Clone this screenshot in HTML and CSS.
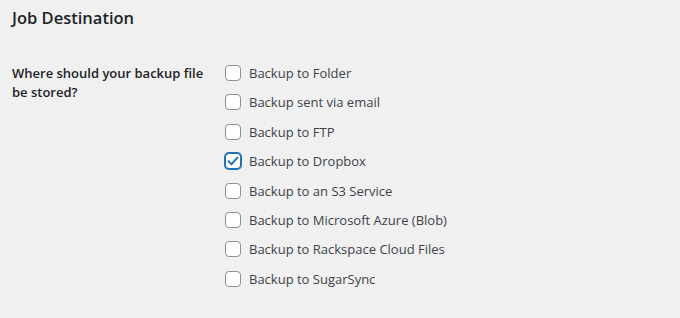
FILE: index.html
```html
<!DOCTYPE html>
<html lang="en">
<head>
<meta charset="utf-8">
<title>Job Destination</title>
<link rel="stylesheet" href="styles.css">
</head>
<body>
<div class="wrap">
  <h2 class="title">Job Destination</h2>
  <div class="form-row">
    <div class="row-label">Where should your backup file be stored?</div>
    <fieldset class="options">
      <label class="opt"><span class="box"></span><span>Backup to Folder</span></label>
      <label class="opt"><span class="box"></span><span>Backup sent via email</span></label>
      <label class="opt"><span class="box"></span><span>Backup to FTP</span></label>
      <label class="opt"><span class="box checked"><svg viewBox="0 0 16 16" width="16" height="16"><path d="M3.6 8.2 L6.6 11.2 L12.4 4.6" fill="none" stroke="#2271b1" stroke-width="2" stroke-linecap="round" stroke-linejoin="round"/></svg></span><span>Backup to Dropbox</span></label>
      <label class="opt"><span class="box"></span><span>Backup to an S3 Service</span></label>
      <label class="opt"><span class="box"></span><span>Backup to Microsoft Azure (Blob)</span></label>
      <label class="opt"><span class="box"></span><span>Backup to Rackspace Cloud Files</span></label>
      <label class="opt"><span class="box"></span><span>Backup to SugarSync</span></label>
    </fieldset>
  </div>
</div>
</body>
</html>
```
FILE: styles.css
```css
html, body {
  margin: 0;
  padding: 0;
  background: #f0f0f1;
}
body {
  font-family: "Open Sans", "Noto Sans", sans-serif;
  font-size: 13px;
  color: #3c434a;
  width: 680px;
  height: 318px;
  overflow: hidden;
}
.wrap {
  padding: 0 12px;
}
.title {
  margin: 0;
  padding-top: 7px;
  font-size: 16.5px;
  line-height: 22px;
  font-weight: 600;
  color: #1d2327;
}
.form-row {
  display: grid;
  grid-template-columns: 213px 1fr;
  margin-top: 34px;
}
.row-label {
  font-weight: 600;
  color: #1d2327;
  line-height: 19px;
  width: 196px;
  padding-top: 1px;
}
.options {
  margin: 0;
  padding: 0;
  border: 0;
  display: flex;
  flex-direction: column;
  gap: 9.4px;
}
.opt {
  display: flex;
  align-items: center;
  height: 20px;
  gap: 8px;
}
.box {
  width: 16px;
  height: 16px;
  box-sizing: border-box;
  border: 1px solid #8c8f94;
  border-radius: 4px;
  background: #fff;
  flex: none;
  position: relative;
}
.box.checked {
  border-color: #2271b1;
  box-shadow: 0 0 0 1px #2271b1;
}
.box svg {
  position: absolute;
  left: -1px;
  top: -1px;
}
```
